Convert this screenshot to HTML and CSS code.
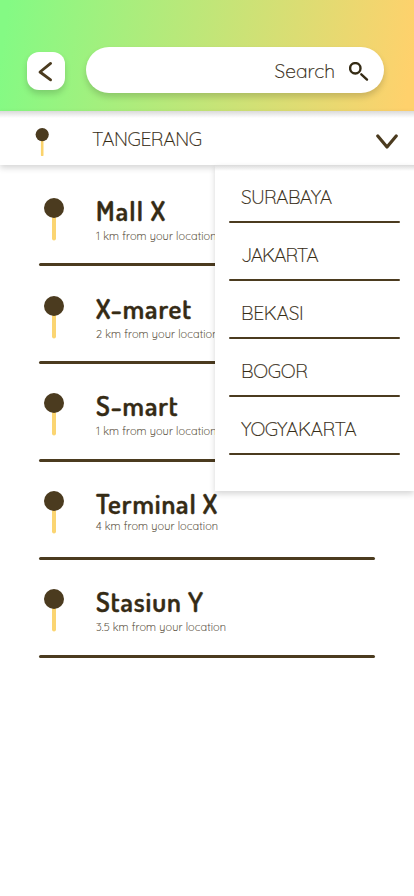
FILE: index.html
```html
<!DOCTYPE html>
<html lang="en">
<head>
<meta charset="utf-8">
<meta name="viewport" content="width=device-width, initial-scale=1">
<title>Locations</title>
<link rel="stylesheet" href="styles.css">
</head>
<body>
<header class="header">
  <button class="back" aria-label="Back"><svg width="38" height="38" viewBox="0 0 38 38"><path d="M23.6 11.4 13 20l10.6 7.8"/></svg></button>
  <div class="search"><span>Search</span><svg width="20" height="20" viewBox="0 0 20 20"><circle cx="6.3" cy="6.3" r="5.2"/><path d="m12.3 12.3 5.7 5.3"/></svg></div>
</header>
<div class="city">
  <svg class="city-pin" width="14" height="28" viewBox="0 0 14 28"><path d="M7.2 10v17"/><circle cx="7.2" cy="6.6" r="6.6"/></svg>
  <span>TANGERANG</span>
  <svg class="chevron" width="22" height="18" viewBox="0 0 22 18"><path d="m1.8 3 9.2 11 9.2-11"/></svg>
  <ul class="menu">
    <li class="surabaya">SURABAYA</li>
    <li class="jakarta">JAKARTA</li>
    <li class="bekasi">BEKASI</li>
    <li class="bogor">BOGOR</li>
    <li class="yogyakarta">YOGYAKARTA</li>
  </ul>
</div>
<main class="places">
  <article class="place mall"><svg class="pin" width="20" height="43" viewBox="0 0 20 43"><path d="M10 16v24.5"/><circle cx="10" cy="10" r="10"/></svg><div><h2>Mall X</h2><p>1 km from your location</p></div></article>
  <article class="place xmaret"><svg class="pin" width="20" height="43" viewBox="0 0 20 43"><path d="M10 16v24.5"/><circle cx="10" cy="10" r="10"/></svg><div><h2>X-maret</h2><p>2 km from your location</p></div></article>
  <article class="place smart"><svg class="pin" width="20" height="43" viewBox="0 0 20 43"><path d="M10 16v24.5"/><circle cx="10" cy="10" r="10"/></svg><div><h2>S-mart</h2><p>1 km from your location</p></div></article>
  <article class="place terminal"><svg class="pin" width="20" height="43" viewBox="0 0 20 43"><path d="M10 16v24.5"/><circle cx="10" cy="10" r="10"/></svg><div><h2>Terminal X</h2><p>4 km from your location</p></div></article>
  <article class="place stasiun"><svg class="pin" width="20" height="43" viewBox="0 0 20 43"><path d="M10 16v24.5"/><circle cx="10" cy="10" r="10"/></svg><div><h2>Stasiun Y</h2><p>3.5 km from your location</p></div></article>
</main>
</body>
</html>
```
FILE: styles.css
```css
* { box-sizing: border-box; }
body { margin: 0; min-height: 896px; background: #fff; color: #352b15; font-family: Quicksand, Inter, sans-serif; font-weight: 300; font-feature-settings: "cv11"; overflow: hidden; }
h2, p, ul { margin: 0; padding: 0; }
svg { display: block; fill: none; stroke: #4b3b1f; stroke-linecap: round; stroke-linejoin: round; flex: none; }
.header { height: 111px; padding: 47px 30px 0 27px; display: flex; gap: 21.5px; background: linear-gradient(98deg, #84fa84 2%, #ffd16c 98%); }
.back { width: 37.5px; height: 38px; margin-top: 5px; padding: 0; border: 0; border-radius: 12px; background: #fff; box-shadow: 0 4px 6px rgba(0,0,0,.16); }
.back svg { stroke-width: 2.8; }
.search { flex: 1; height: 46px; border-radius: 23px; background: #fff; box-shadow: 0 4px 6px rgba(0,0,0,.16); display: flex; align-items: center; justify-content: flex-end; padding-right: 15px; gap: 14px; font-size: 19.3px; }
.search span, .city { -webkit-text-stroke: .2px #352b15; }
.search span { margin-top: 1px; }
.search svg { stroke: #352b15; stroke-width: 2.4; margin-top: 3px; }
.city { position: relative; z-index: 2; height: 53.5px; padding: 0 16px 0 35px; display: flex; align-items: center; background: linear-gradient(#dadada, #fff 7px); font-size: 19.3px; box-shadow: 0 3px 6px rgba(0,0,0,.16); }
.city-pin { margin: 8px 43px 0 0; }
.city-pin path { stroke: #fbd36c; stroke-width: 2.6; }
.city-pin circle, .pin circle { fill: #4b3b1f; stroke: none; }
.city span { flex: 1; margin-top: 3px; letter-spacing: -.5px; }
.chevron { stroke-width: 3.2; margin-top: 8px; }
.menu { position: absolute; top: 53.5px; left: 215px; width: 199px; height: 326.5px; padding-left: 14px; list-style: none; background: linear-gradient(#dadada, #fff 6px); box-shadow: 0 3px 6px rgba(0,0,0,.16); }
.menu li { position: relative; width: 171px; height: 58px; padding: 20px 0 0 12px; line-height: 24px; }
.menu li::after { content: ""; position: absolute; left: 0; right: 0; bottom: 0; height: 2px; border-radius: 1px; background: #4b3b1f; }
.surabaya { letter-spacing: -.7px; }
.jakarta { letter-spacing: -1.15px; }
.bekasi, .bogor { letter-spacing: -.35px; }
.yogyakarta { letter-spacing: -.6px; }
.places { padding: 6.8px 39px 0; }
.place { position: relative; height: 97.8px; padding: 26.5px 0 0 5px; display: flex; gap: 32px; white-space: nowrap; }
.place::after { content: ""; position: absolute; left: 0; right: 0; bottom: 2.7px; height: 3px; border-radius: 1.5px; background: #4b3b1f; }
.place div { margin-top: -.1px; }
.pin path { stroke: #fbd572; stroke-width: 4; }
h2 { height: 25px; font-family: Dosis, "Noto Sans", sans-serif; font-size: 27px; line-height: 25px; font-weight: 600; letter-spacing: .9px; -webkit-text-stroke: .4px #352b15; }
.mall h2 { letter-spacing: 1.2px; }
p { font-size: 11px; line-height: 14px; margin-top: 6px; letter-spacing: .1px; color: #5a513e; -webkit-text-stroke: .15px #5a513e; }
.terminal p { margin-top: 3px; }
```
